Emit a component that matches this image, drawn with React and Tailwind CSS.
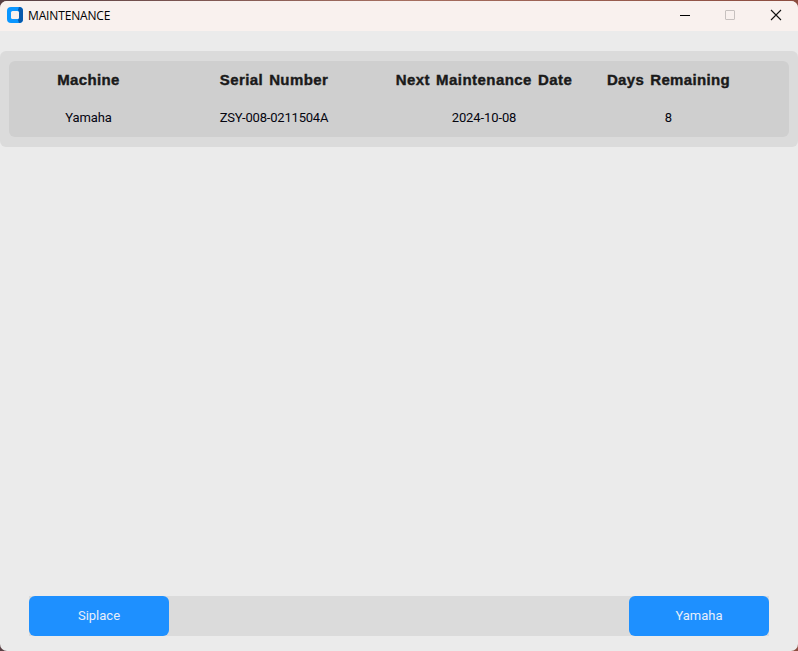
const columns = [
  { title: 'Machine', value: 'Yamaha', spacing: 'tracking-[0.35px]', cell: 'tracking-[-0.1px]' },
  { title: 'Serial Number', value: 'ZSY-008-0211504A', spacing: 'tracking-[0.4px] [word-spacing:1.5px]', cell: 'tracking-[-0.2px]' },
  { title: 'Next Maintenance Date', value: '2024-10-08', spacing: 'tracking-[0.45px] [word-spacing:1.5px]', cell: 'tracking-[-0.1px]' },
  { title: 'Days Remaining', value: '8', spacing: 'tracking-[0.36px] [word-spacing:1.5px]', cell: 'tracking-[0px]' },
];

function TitleBar() {
  return (
    <header className="flex h-[30px] shrink-0 items-center bg-[#f9f1ee] pl-[7px]">
      <svg width="16" height="16" viewBox="0 0 16 16" className="mb-[2px] shrink-0">
        <rect width="16" height="16" rx="4" fill="#0b96ff" />
        <path d="M12 0a4 4 0 0 1 4 4v8a4 4 0 0 1-4 4l-1-3 1-2V5l-1-2z" fill="#0759ac" />
        <rect x="4" y="4" width="8" height="8" rx="1.5" fill="#f9f1ee" />
      </svg>
      <h1 className="ml-[5px] font-['Open_Sans','Noto_Sans',sans-serif] text-[12px] leading-none tracking-[-0.15px] text-black">
        MAINTENANCE
      </h1>
      <div className="ml-auto flex items-center">
        <button aria-label="Minimize" className="flex h-[30px] w-[45px] items-center justify-center pb-[2px]">
          <svg width="12" height="12" viewBox="0 0 12 12" shapeRendering="crispEdges">
            <rect x="1" y="6" width="10" height="1" fill="#000" />
          </svg>
        </button>
        <button aria-label="Maximize" className="flex h-[30px] w-[45px] items-center justify-center pb-[2px]">
          <svg width="12" height="12" viewBox="0 0 12 12" fill="none">
            <rect x="1.5" y="1.5" width="9" height="9" rx="0.5" stroke="#c7c1bf" />
          </svg>
        </button>
        <button aria-label="Close" className="flex h-[30px] w-[46px] items-center justify-center pb-[2px] pl-[2px]">
          <svg width="12" height="12" viewBox="0 0 12 12" fill="none">
            <path d="M1 1l10 10M11 1L1 11" stroke="#111" strokeWidth="1.1" />
          </svg>
        </button>
      </div>
    </header>
  );
}

export default function App() {
  return (
    <div className="h-[651px] w-[798px] overflow-hidden bg-linear-to-r from-[#594044] via-[#a66f60] to-[#8c4d40] pt-px">
      <div className="flex h-[650px] flex-col overflow-hidden rounded-[7px] bg-[#ebebeb]">
        <TitleBar />
        <section className="mt-5 h-24 shrink-0 rounded-[6px] bg-[#dbdbdb] px-[9px] py-[10px]">
          <div className="grid h-[76px] grid-cols-[159px_212px_208px_161px] rounded-[6px] bg-[#cfcfcf] pt-[10px] text-center">
            {columns.map((c) => (
              <div key={c.title} className="whitespace-nowrap">
                <div className={`font-['Liberation_Sans',Arial,sans-serif] text-[15px] leading-[18px] font-bold text-[#1a1a1a] [-webkit-text-stroke:0.4px_#1a1a1a] ${c.spacing}`}>
                  {c.title}
                </div>
                <div className={`mt-5 font-[Roboto,sans-serif] text-[13px] leading-[18px] text-[#050510] ${c.cell}`}>
                  {c.value}
                </div>
              </div>
            ))}
          </div>
        </section>
        <footer className="mx-[29px] mt-auto mb-[15px] flex h-10 justify-between bg-[#dbdbdb] font-[Roboto,sans-serif] text-[13px] text-[#e6eefa]">
          <button className="w-[140px] rounded-[6px] bg-[#1e90ff]">Siplace</button>
          <button className="w-[140px] rounded-[6px] bg-[#1e90ff]">Yamaha</button>
        </footer>
      </div>
    </div>
  );
}
